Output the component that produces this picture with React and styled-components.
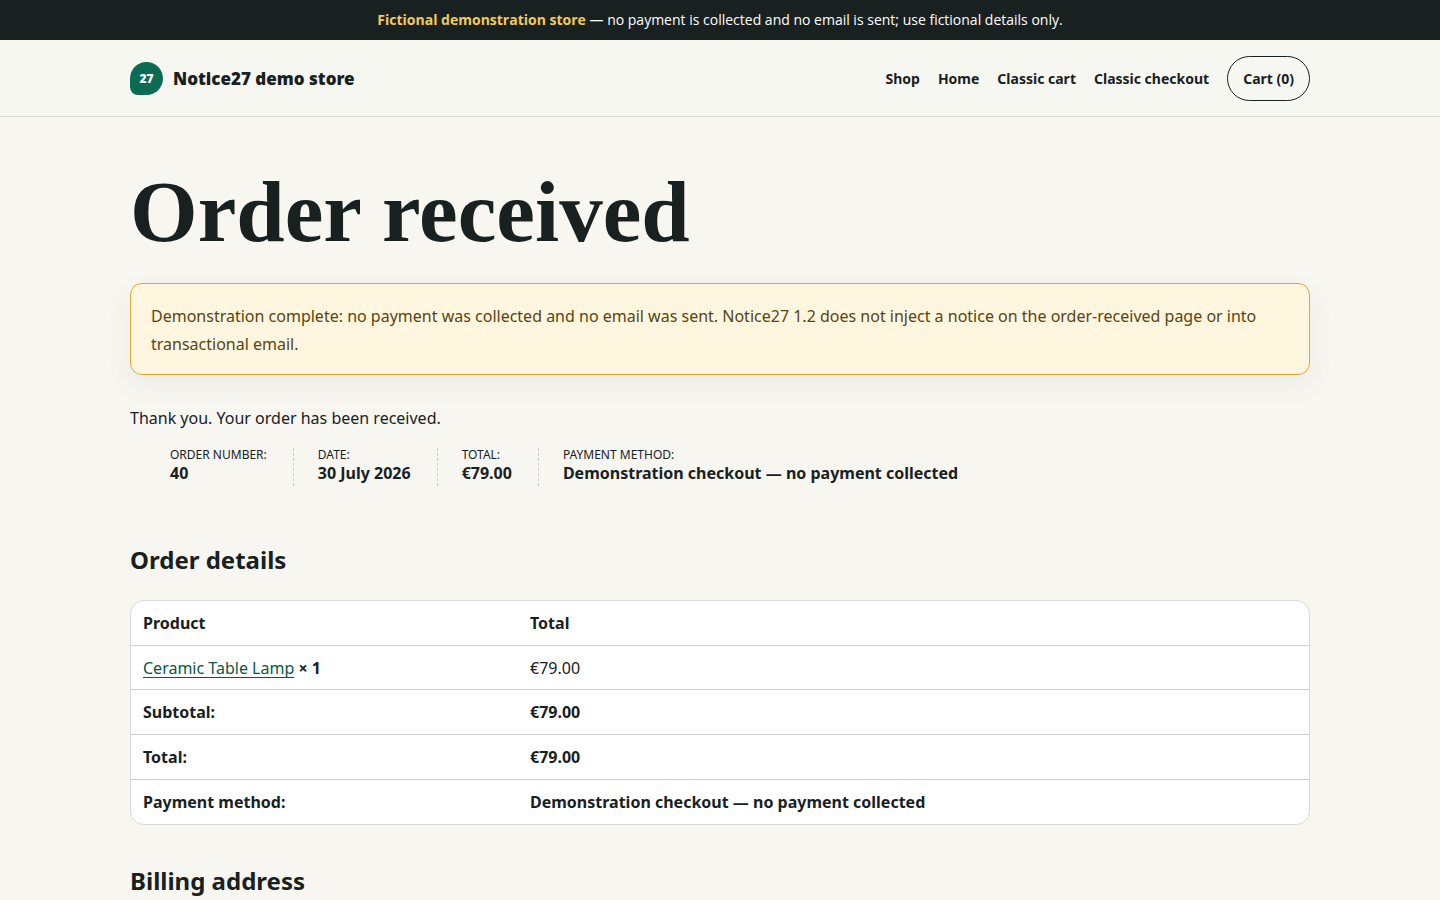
import React from 'react'
import styled, { createGlobalStyle } from 'styled-components';

const GlobalStyle = createGlobalStyle`
  * {
    box-sizing: border-box;
  }

  body {
    margin: 0;
    background: #f7f6f1;
    color: #18211f;
    font-family: "Noto Sans", "Open Sans", sans-serif;
    font-size: 16px;
    line-height: 28px;
  }
`;

const DemoBanner = styled.div`
  padding: 10px 20px;
  background: #18211f;
  color: #fff;
  font-family: "Open Sans", sans-serif;
  font-size: 14px;
  line-height: 20px;
  text-align: center;

  strong {
    color: #f4c95d;
    font-weight: 700;
  }
`;

const Container = styled.div`
  width: calc(100% - 40px);
  max-width: 1180px;
  margin: 0 auto;
`;

const SiteHeader = styled.header`
  border-bottom: 1px solid #d5dad5;
  background: #f7f7f1;
`;

const HeaderRow = styled(Container)`
  display: flex;
  align-items: center;
  justify-content: space-between;
  min-height: 76px;
`;

const Brand = styled.a`
  display: flex;
  align-items: center;
  gap: 10px;
  color: inherit;
  font-size: 17px;
  font-weight: 900;
  line-height: 23px;
  text-decoration: none;
`;

const BrandMark = styled.span`
  display: grid;
  place-items: center;
  width: 33px;
  height: 33px;
  border-radius: 50% 50% 50% 8px;
  background: #0b6b53;
  color: #fff;
  font-size: 12px;
  font-weight: 900;
`;

const Nav = styled.nav`
  display: flex;
  align-items: center;
  gap: 18px;
`;

const NavLink = styled.a`
  color: inherit;
  font-size: 14px;
  font-weight: 700;
  line-height: 23px;
  text-decoration: none;
`;

const CartLink = styled(NavLink)`
  padding: 10px 15px;
  border: 1px solid #18211f;
  border-radius: 23px;
`;

const Main = styled(Container)`
  padding: 54px 0;
`;

const PageTitle = styled.h1`
  margin: 0 0 30px;
  font-family: "Liberation Serif", serif;
  font-size: 87px;
  font-weight: 700;
  line-height: 82px;
`;

const Notice = styled.div`
  margin-bottom: 29px;
  padding: 18px 20px 16px;
  border: 1px solid #dda936;
  border-radius: 12px;
  background: #fff6df;
  box-shadow: 0 10px 30px rgba(24, 33, 31, 0.05);
  color: #594411;
`;

const ThankYou = styled.p`
  margin: 0 0 16px;
`;

const Overview = styled.ul`
  display: flex;
  flex-wrap: wrap;
  margin: 0 0 52px;
  padding: 0 0 0 40px;
  list-style: none;
`;

const OverviewItem = styled.li`
  margin-right: 24px;
  padding: 0 26px 2px 0;
  border-right: 1px dashed #cfc8d8;
  font-size: 12px;
  line-height: 14px;
  text-transform: uppercase;

  strong {
    display: block;
    font-size: 16px;
    line-height: 22px;
    text-transform: none;
  }

  &:last-child {
    margin-right: 0;
    padding-right: 0;
    border-right: 0;
  }
`;

const SectionTitle = styled.h2`
  margin: 0 0 18px;
  font-size: 24px;
  font-weight: 700;
  line-height: 44px;
`;

const OrderTable = styled.table`
  width: 100%;
  margin-bottom: 34px;
  border: 1px solid #d8dcd6;
  border-radius: 14px;
  border-spacing: 0;
  background: #fff;
  table-layout: fixed;

  th,
  td {
    padding: 8px 12px;
    text-align: left;
  }

  th:first-child {
    width: 387px;
  }

  tbody td {
    padding-bottom: 7px;
  }

  tbody > tr > *,
  tfoot > tr > * {
    border-top: 1px solid #d0d2d1;
  }

  tfoot td {
    font-weight: 700;
  }
`;

const ProductLink = styled.a`
  color: #0a5743;
  text-decoration: underline;
  text-underline-offset: 3px;
  text-decoration-skip-ink: none;
`;

const links = ['Shop', 'Home', 'Classic cart', 'Classic checkout'];

const overview = [
    { label: 'Order number:', value: '40' },
    { label: 'Date:', value: '30 July 2026' },
    { label: 'Total:', value: '€79.00' },
    { label: 'Payment method:', value: 'Demonstration checkout — no payment collected' },
];

const totals = [
    { label: 'Subtotal:', value: '€79.00' },
    { label: 'Total:', value: '€79.00' },
    { label: 'Payment method:', value: 'Demonstration checkout — no payment collected' },
];

const App = () => {
    return (
        <>
            <GlobalStyle />
            <DemoBanner>
                <strong>Fictional demonstration store</strong> — no payment is collected and no email is sent; use fictional details only.
            </DemoBanner>
            <SiteHeader>
                <HeaderRow>
                    <Brand href="#">
                        <BrandMark>27</BrandMark>
                        <span>Notice27 demo store</span>
                    </Brand>
                    <Nav>
                        {links.map((link) => (
                            <NavLink key={link} href="#">{link}</NavLink>
                        ))}
                        <CartLink href="#">Cart (0)</CartLink>
                    </Nav>
                </HeaderRow>
            </SiteHeader>
            <Main as="main">
                <PageTitle>Order received</PageTitle>
                <Notice>
                    Demonstration complete: no payment was collected and no email was sent. Notice27 1.2 does not inject a notice on the order-received page or into transactional email.
                </Notice>
                <ThankYou>Thank you. Your order has been received.</ThankYou>
                <Overview>
                    {overview.map((item) => (
                        <OverviewItem key={item.label}>
                            {item.label}
                            <strong>{item.value}</strong>
                        </OverviewItem>
                    ))}
                </Overview>
                <SectionTitle>Order details</SectionTitle>
                <OrderTable>
                    <thead>
                        <tr>
                            <th>Product</th>
                            <th>Total</th>
                        </tr>
                    </thead>
                    <tbody>
                        <tr>
                            <td>
                                <ProductLink href="#">Ceramic Table Lamp</ProductLink> <strong>× 1</strong>
                            </td>
                            <td>€79.00</td>
                        </tr>
                    </tbody>
                    <tfoot>
                        {totals.map((row) => (
                            <tr key={row.label}>
                                <th scope="row">{row.label}</th>
                                <td>{row.value}</td>
                            </tr>
                        ))}
                    </tfoot>
                </OrderTable>
                <SectionTitle>Billing address</SectionTitle>
            </Main>
        </>
    )
}

export default App
